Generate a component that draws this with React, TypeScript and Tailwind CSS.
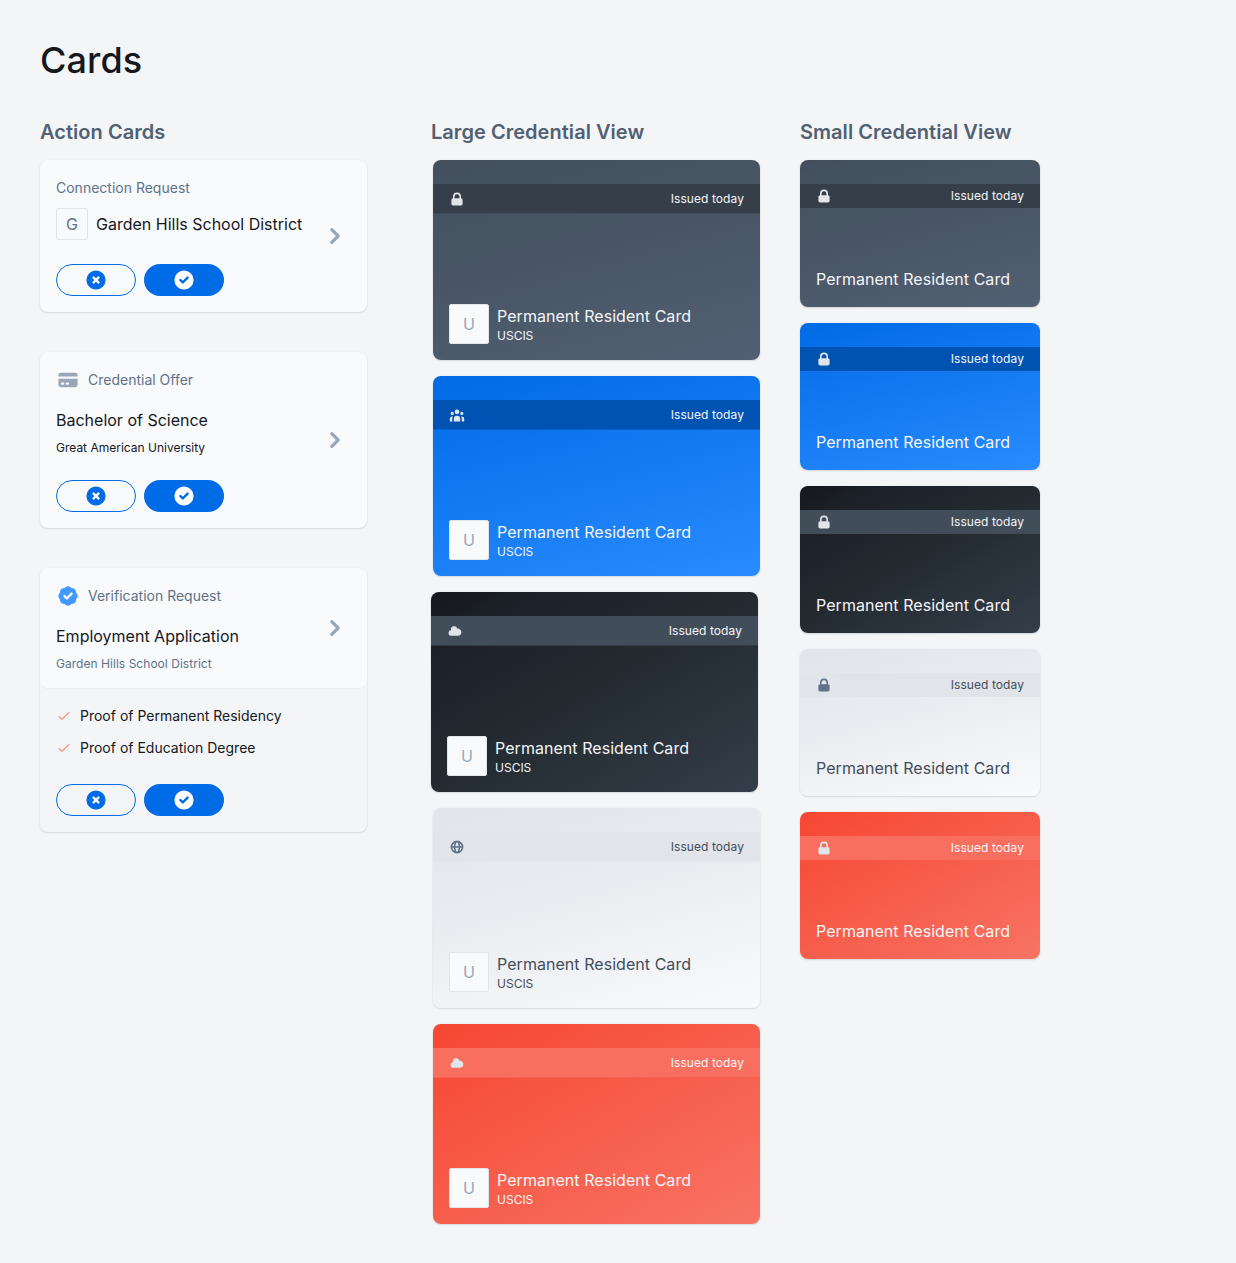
import type { ReactNode } from "react";
import type { IconType } from "react-icons";
import {
  HiBadgeCheck,
  HiCheckCircle,
  HiChevronRight,
  HiCloud,
  HiCreditCard,
  HiGlobeAlt,
  HiLockClosed,
  HiOutlineCheck,
  HiUserGroup,
  HiXCircle,
} from "react-icons/hi";

type Theme = { card: string; band: string; text: string; icon: string };

const slate: Theme = {
  card: "bg-[linear-gradient(165deg,#434e5b_0%,#455360_15%,#495564_45%,#516073_100%)]",
  band: "bg-[#363f49] border-[#414d59]",
  text: "text-[#f4f5f7]",
  icon: "text-[#e1e4e9]",
};
const blue: Theme = {
  card: "bg-[linear-gradient(165deg,#006be6_0%,#298bff_100%)]",
  band: "bg-[#0053b3] border-[#0262d0]",
  text: "text-[#f4f5f7]",
  icon: "text-[#e1e4e9]",
};
const black: Theme = {
  card: "bg-[linear-gradient(150deg,#15181c_0%,#1d222a_18%,#22292f_45%,#343e4a_100%)]",
  band: "bg-[#424d5a] border-[#323c47]",
  text: "text-[#f4f5f7]",
  icon: "text-[#e1e4e9]",
};
const light: Theme = {
  card: "bg-[linear-gradient(165deg,#e1e4e9_0%,#e8ebef_38%,#f9fafc_100%)]",
  band: "bg-[#e1e4e9] border-[#e5e8ec]",
  text: "text-[#434e5b]",
  icon: "text-[#5f728a]",
};
const red: Theme = {
  card: "bg-[linear-gradient(150deg,#f64732_0%,#f87364_100%)]",
  band: "bg-[#f86f60] border-[#f75f4e]",
  text: "text-[#f4f5f7]",
  icon: "text-[#e1e4e9]",
};

const shadow = "shadow-[0_1px_2px_rgba(0,0,0,0.12),0_0_2px_rgba(0,0,0,0.05)]";

function LargeCard({ theme, icon: Icon, shifted }: { theme: Theme; icon: IconType; shifted?: boolean }) {
  return (
    <div className={`flex h-[200px] w-[327px] flex-col overflow-hidden rounded-lg pt-6 ${shifted ? "" : "ml-0.5"} ${theme.card} ${theme.text} ${shadow}`}>
      <div className={`flex h-[30px] items-center justify-between border-b px-4 ${theme.band}`}>
        <Icon size={16} className={theme.icon} />
        <span className="text-xs tracking-[0.006em]">Issued today</span>
      </div>
      <div className="mt-auto flex gap-2 p-4">
        <div className="flex size-10 items-center justify-center rounded-[2px] border border-[#e1e4e9] bg-[#f9fafc] text-base text-[#98a6b7]">U</div>
        <div>
          <div className="text-base leading-6 tracking-[0.003em]">Permanent Resident Card</div>
          <div className="text-xs leading-4">USCIS</div>
        </div>
      </div>
    </div>
  );
}

function SmallCard({ theme }: { theme: Theme }) {
  return (
    <div className={`flex h-[147px] w-60 flex-col overflow-hidden rounded-lg pt-6 ${theme.card} ${theme.text} ${shadow}`}>
      <div className={`flex h-6 items-center justify-between px-4 ${theme.band}`}>
        <HiLockClosed size={16} className={theme.icon} />
        <span className="text-xs tracking-[0.006em]">Issued today</span>
      </div>
      <div className="mt-auto px-4 pb-4 text-base leading-6 tracking-[0.003em]">Permanent Resident Card</div>
    </div>
  );
}

function Actions() {
  return (
    <div className="flex gap-2">
      <button className="flex h-8 w-20 items-center justify-center rounded-full border border-[#006be6] text-[#006be6]">
        <HiXCircle size={24} />
      </button>
      <button className="flex h-8 w-20 items-center justify-center rounded-full bg-[#006be6] text-white">
        <HiCheckCircle size={24} />
      </button>
    </div>
  );
}

function Label({ icon, children }: { icon?: ReactNode; children: ReactNode }) {
  return (
    <div className="flex h-6 items-center gap-2 text-sm text-[#5f728a]">
      {icon}
      {children}
    </div>
  );
}

function Chevron() {
  return <HiChevronRight size={32} className="shrink-0 text-[#98a6b7]" />;
}

function Requirement({ children }: { children: ReactNode }) {
  return (
    <li className="flex h-6 items-center gap-2 text-sm">
      <HiOutlineCheck size={16} className="text-[#fa9a8f]" />
      {children}
    </li>
  );
}

export default function App() {
  return (
    <main className="h-[1263px] w-[1236px] bg-[#f4f5f7] px-10 pt-9 font-['Inter',sans-serif] text-[#15181c]">
      <h1 className="text-4xl leading-[48px] font-medium tracking-[0.003em]">Cards</h1>
      <div className="mt-8 flex items-start">
        <section className="w-[391px]">
          <h2 className="mb-3 text-xl leading-8 font-semibold tracking-[0.002em] text-[#516073]">Action Cards</h2>
          <div className="flex w-[327px] flex-col gap-10">
            <article className={`flex h-[152px] items-center justify-between rounded-lg bg-[#f9fafc] p-4 ${shadow}`}>
              <div>
                <Label>Connection Request</Label>
                <div className="mt-2 mb-6 flex items-center gap-2">
                  <div className="flex size-8 items-center justify-center rounded-[2px] border border-[#e1e4e9] text-base text-[#5f728a]">G</div>
                  <span className="text-base">Garden Hills School District</span>
                </div>
                <Actions />
              </div>
              <Chevron />
            </article>
            <article className={`flex h-44 items-center justify-between rounded-lg bg-[#f9fafc] p-4 ${shadow}`}>
              <div>
                <Label icon={<HiCreditCard size={24} className="text-[#98a6b7]" />}>Credential Offer</Label>
                <div className="mt-4 text-base leading-6">Bachelor of Science</div>
                <div className="mt-2 mb-6 text-xs leading-4">Great American University</div>
                <Actions />
              </div>
              <Chevron />
            </article>
            <article className={`h-[264px] rounded-lg ${shadow}`}>
              <div className="flex h-[120px] items-center justify-between rounded-lg bg-[#f9fafc] p-4 shadow-[0_1px_1px_rgba(0,0,0,0.03)]">
                <div>
                  <Label icon={<HiBadgeCheck size={24} className="text-[#4298ff]" />}>Verification Request</Label>
                  <div className="mt-4 text-base leading-6">Employment Application</div>
                  <div className="mt-2 text-xs leading-4 tracking-[0.003em] text-[#5f728a]">Garden Hills School District</div>
                </div>
                <Chevron />
              </div>
              <div className="p-4">
                <ul className="mb-6 flex flex-col gap-2">
                  <Requirement>Proof of Permanent Residency</Requirement>
                  <Requirement>Proof of Education Degree</Requirement>
                </ul>
                <Actions />
              </div>
            </article>
          </div>
        </section>
        <section className="w-[369px]">
          <h2 className="mb-3 text-xl leading-8 font-semibold tracking-[0.002em] text-[#516073]">Large Credential View</h2>
          <div className="flex flex-col gap-4">
            <LargeCard theme={slate} icon={HiLockClosed} />
            <LargeCard theme={blue} icon={HiUserGroup} />
            <LargeCard theme={black} icon={HiCloud} shifted />
            <LargeCard theme={light} icon={HiGlobeAlt} />
            <LargeCard theme={red} icon={HiCloud} />
          </div>
        </section>
        <section>
          <h2 className="mb-3 text-xl leading-8 font-semibold tracking-[0.002em] text-[#516073]">Small Credential View</h2>
          <div className="flex flex-col gap-4">
            <SmallCard theme={slate} />
            <SmallCard theme={blue} />
            <SmallCard theme={black} />
            <SmallCard theme={light} />
            <SmallCard theme={red} />
          </div>
        </section>
      </div>
    </main>
  );
}
